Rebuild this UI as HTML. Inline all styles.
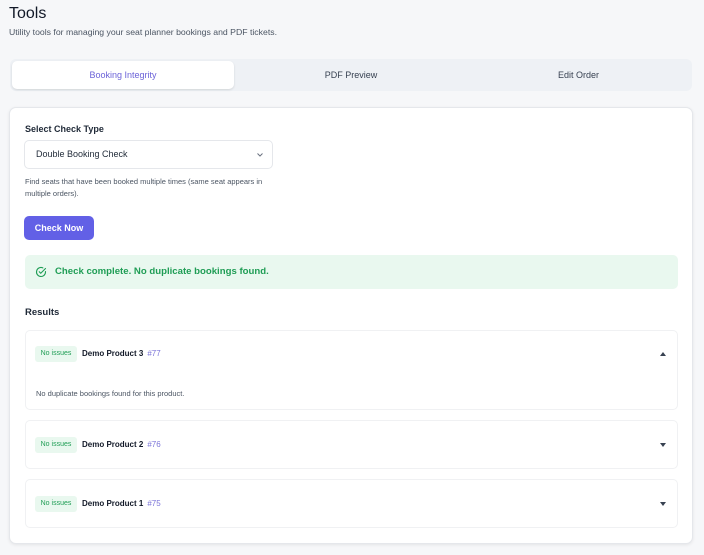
<!DOCTYPE html>
<html><head><style>
*{box-sizing:border-box;margin:0;padding:0}
body{width:704px;height:555px;background:#f6f7f9;font-family:"Liberation Sans",sans-serif;color:#1f2937;position:relative;overflow:hidden}
.a{position:absolute}
h1{position:absolute;left:9px;top:5px;font-size:16px;font-weight:400;color:#111827}
.sub{left:9px;top:27px;font-size:8.7px;color:#4b5563}
.tabs{left:10px;top:59px;width:682px;height:32px;background:#eef1f5;border-radius:6px}
.tab{position:absolute;top:0;height:32px;line-height:32px;text-align:center;font-size:9px;color:#374151}
.act{left:2px;top:2px;height:28px;line-height:28px;width:222px;background:#fff;border-radius:5px;box-shadow:0 1px 2px rgba(0,0,0,.12);color:#6c63d8}
.card{left:9px;top:107px;width:684px;height:437px;background:#fff;border:1px solid #e5e7eb;border-radius:7px;box-shadow:0 1px 3px rgba(0,0,0,.08)}
.lbl{left:25px;top:124px;font-size:9px;font-weight:700;color:#1f2937}
.sel{left:24px;top:140px;width:249px;height:29px;border:1px solid #e5e7eb;border-radius:5px;font-size:9px;line-height:27px;padding-left:11px;color:#1f2937}
.help{left:25px;top:176px;width:250px;font-size:7.5px;line-height:11.5px;color:#4b5563}
.btn{left:24px;top:216px;width:70px;height:24px;background:#6260e6;border-radius:5px;color:#fff;font-size:9px;font-weight:700;text-align:center;line-height:24px}
.alert{left:25px;top:255px;width:653px;height:34px;background:#e9f8ef;border-radius:5px;color:#1f9d55;font-size:9.6px;font-weight:700;line-height:34px;padding-left:30px}
.res{left:25px;top:307px;font-size:9.5px;font-weight:700}
.item{position:absolute;left:25px;width:653px;border:1px solid #f0f1f3;border-radius:5px;background:#fff}
.badge{position:absolute;left:9px;width:42px;height:16px;background:#e9f8ef;color:#1f9d55;font-size:7px;line-height:16px;text-align:center;border-radius:3px}
.nm{position:absolute;left:56px;font-size:8px;font-weight:700;color:#111827;line-height:16px}
.nm span{font-weight:400;color:#7c75d8;margin-left:4px}
.car{position:absolute;right:11px;width:0;height:0;border-left:3px solid transparent;border-right:3px solid transparent}
</style></head><body>
<h1>Tools</h1>
<div class="a sub">Utility tools for managing your seat planner bookings and PDF tickets.</div>
<div class="a tabs">
<div class="tab act">Booking Integrity</div>
<div class="tab" style="left:227px;width:228px">PDF Preview</div>
<div class="tab" style="left:455px;width:227px">Edit Order</div>
</div>
<div class="a card"></div>
<div class="a lbl">Select Check Type</div>
<div class="a sel">Double Booking Check<svg class="a" style="right:9px;top:12px" width="6" height="4" viewBox="0 0 6 4"><path d="M.5.5 3 3 5.5.5" fill="none" stroke="#6b7280" stroke-width="1"/></svg></div>
<div class="a help">Find seats that have been booked multiple times (same seat appears in multiple orders).</div>
<div class="a btn">Check Now</div>
<div class="a alert"><svg class="a" style="left:10px;top:11px" width="12" height="12" viewBox="0 0 24 24" fill="none" stroke="#1f9d55" stroke-width="2.2" stroke-linecap="round"><path d="M21 11v1a9 9 0 1 1-5.3-8.2"/><path d="M8.5 11.5l3 3L21 5"/></svg>Check complete. No duplicate bookings found.</div>
<div class="a res">Results</div>
<div class="item" style="top:330px;height:80px">
<div class="badge" style="top:15px">No issues</div><div class="nm" style="top:15px">Demo Product 3<span>#77</span></div>
<div class="car" style="top:21px;border-bottom:4px solid #374151"></div>
<div style="position:absolute;left:10px;top:58px;font-size:7.5px;color:#4b5563">No duplicate bookings found for this product.</div>
</div>
<div class="item" style="top:420px;height:49px">
<div class="badge" style="top:16px">No issues</div><div class="nm" style="top:16px">Demo Product 2<span>#76</span></div>
<div class="car" style="top:22px;border-top:4px solid #374151"></div>
</div>
<div class="item" style="top:479px;height:49px">
<div class="badge" style="top:16px">No issues</div><div class="nm" style="top:16px">Demo Product 1<span>#75</span></div>
<div class="car" style="top:22px;border-top:4px solid #374151"></div>
</div>
</body></html>
